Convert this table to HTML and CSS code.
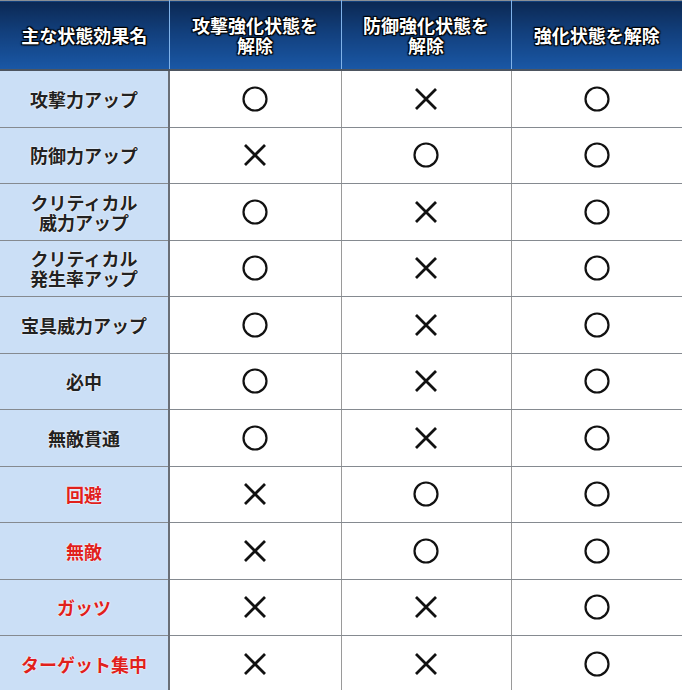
FILE: index.html
```html
<!DOCTYPE html>
<html lang="ja">
<head>
<meta charset="utf-8">
<link rel="stylesheet" href="styles.css">
</head>
<body>
<svg class="defs" width="0" height="0">
  <defs>
    <symbol id="o" viewBox="0 0 30 30"><circle cx="15" cy="15" r="11.5" fill="none" stroke="#111" stroke-width="2.2"/></symbol>
    <symbol id="x" viewBox="0 0 30 30"><path d="M5 5 L25 25 M25 5 L5 25" fill="none" stroke="#111" stroke-width="2.8"/></symbol>
  </defs>
</svg>
<table class="grid">
  <colgroup>
    <col class="c1"><col class="c2"><col class="c3"><col class="c4">
  </colgroup>
  <thead>
    <tr>
      <th>主な状態効果名</th>
      <th>攻撃強化状態を<br>解除</th>
      <th>防御強化状態を<br>解除</th>
      <th>強化状態を解除</th>
    </tr>
  </thead>
  <tbody>
    <tr><td class="name">攻撃力アップ</td><td><svg class="mk"><use href="#o"/></svg></td><td><svg class="mk"><use href="#x"/></svg></td><td><svg class="mk"><use href="#o"/></svg></td></tr>
    <tr><td class="name">防御力アップ</td><td><svg class="mk"><use href="#x"/></svg></td><td><svg class="mk"><use href="#o"/></svg></td><td><svg class="mk"><use href="#o"/></svg></td></tr>
    <tr><td class="name">クリティカル<br>威力アップ</td><td><svg class="mk"><use href="#o"/></svg></td><td><svg class="mk"><use href="#x"/></svg></td><td><svg class="mk"><use href="#o"/></svg></td></tr>
    <tr><td class="name">クリティカル<br>発生率アップ</td><td><svg class="mk"><use href="#o"/></svg></td><td><svg class="mk"><use href="#x"/></svg></td><td><svg class="mk"><use href="#o"/></svg></td></tr>
    <tr><td class="name">宝具威力アップ</td><td><svg class="mk"><use href="#o"/></svg></td><td><svg class="mk"><use href="#x"/></svg></td><td><svg class="mk"><use href="#o"/></svg></td></tr>
    <tr><td class="name">必中</td><td><svg class="mk"><use href="#o"/></svg></td><td><svg class="mk"><use href="#x"/></svg></td><td><svg class="mk"><use href="#o"/></svg></td></tr>
    <tr><td class="name">無敵貫通</td><td><svg class="mk"><use href="#o"/></svg></td><td><svg class="mk"><use href="#x"/></svg></td><td><svg class="mk"><use href="#o"/></svg></td></tr>
    <tr><td class="name red">回避</td><td><svg class="mk"><use href="#x"/></svg></td><td><svg class="mk"><use href="#o"/></svg></td><td><svg class="mk"><use href="#o"/></svg></td></tr>
    <tr><td class="name red">無敵</td><td><svg class="mk"><use href="#x"/></svg></td><td><svg class="mk"><use href="#o"/></svg></td><td><svg class="mk"><use href="#o"/></svg></td></tr>
    <tr><td class="name red">ガッツ</td><td><svg class="mk"><use href="#x"/></svg></td><td><svg class="mk"><use href="#x"/></svg></td><td><svg class="mk"><use href="#o"/></svg></td></tr>
    <tr><td class="name red">ターゲット集中</td><td><svg class="mk"><use href="#x"/></svg></td><td><svg class="mk"><use href="#x"/></svg></td><td><svg class="mk"><use href="#o"/></svg></td></tr>
  </tbody>
</table>
</body>
</html>
```
FILE: styles.css
```css
html, body {
  margin: 0;
  padding: 0;
  background: #ffffff;
}
body {
  font-family: "Noto Sans CJK JP", "Noto Sans", sans-serif;
  width: 682px;
  height: 690px;
  overflow: hidden;
}
.defs {
  position: absolute;
  width: 0;
  height: 0;
}
.grid {
  width: 682px;
  border-collapse: collapse;
  table-layout: fixed;
  border-top: 1px solid #8a8f96;
}
.c1 { width: 169px; }
.c2 { width: 172px; }
.c3 { width: 170px; }
.c4 { width: 171px; }
.grid th {
  height: 68px;
  padding: 0;
  background: linear-gradient(to bottom, #0b2853 0%, #123f7c 45%, #1a58a6 100%);
  color: #ffffff;
  font-size: 18px;
  font-weight: 700;
  line-height: 20px;
  text-align: center;
  vertical-align: middle;
  border-left: 1px solid #7fb2ea;
  border-bottom: 2px solid #4d5560;
  text-shadow: 0 0 2px #000, 1px 1px 1px #000, -1px -1px 1px #000, 1px -1px 1px #000, -1px 1px 1px #000;
}
.grid th:first-child {
  border-left: none;
}
.grid td {
  height: 55.5px;
  padding: 0;
  text-align: center;
  vertical-align: middle;
  border-left: 1px solid #9a9a9a;
  border-bottom: 1px solid #858a90;
}
.grid td.name {
  background: #cbdff6;
  border-left: none;
  border-right: 2px solid #6a6f77;
  color: #222222;
  font-size: 18px;
  font-weight: 700;
  line-height: 20px;
  text-shadow: 0 0 2px #ffffff, 0 0 1px #ffffff;
}
.grid td.red {
  color: #e0211c;
}
.mk {
  display: block;
  width: 30px;
  height: 30px;
  margin: 0 auto;
}
```
